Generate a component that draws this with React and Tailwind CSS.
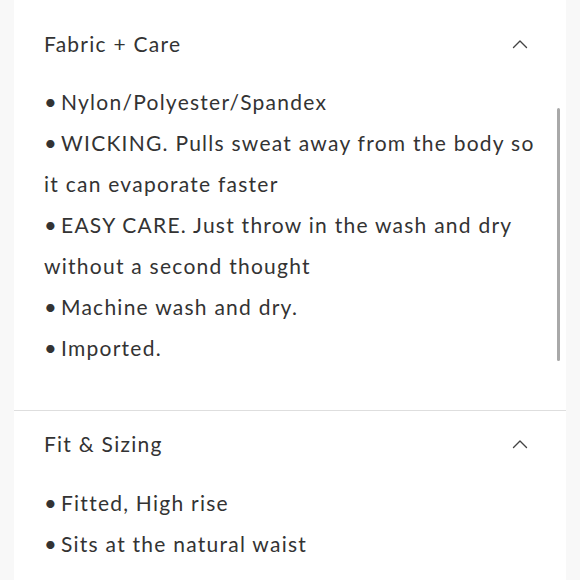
import React from "react";

const Chevron = () => (
  <svg width="16" height="10" viewBox="0 0 16 10" fill="none" className="text-[#444]">
    <polyline points="1.5,8.5 8,2 14.5,8.5" stroke="currentColor" strokeWidth="1.4" strokeLinecap="round" strokeLinejoin="round" />
  </svg>
);

const Section = ({ title, lines, className, bodyClass }) => (
  <div className={className}>
    <div className="flex items-center justify-between pl-[30px] pr-[38px] h-[41px]">
      <span>{title}</span>
      <Chevron />
    </div>
    <div className={`pl-[30px] ${bodyClass}`}>
      {lines.map((line, i) => (
        <div key={i} className="h-[41px] leading-[41px] whitespace-nowrap">
          {line.startsWith("• ") ? (
            <>
              <span className="inline-block w-[17px] text-[22px] tracking-normal align-top">•</span>
              {line.slice(2)}
            </>
          ) : (
            line
          )}
        </div>
      ))}
    </div>
  </div>
);

export default function App() {
  return (
    <div
      className="w-full h-[580px] bg-[#f8f8f8] px-[14px] overflow-hidden text-[21px] tracking-[1.25px] text-[#333]"
      style={{ fontFamily: "Lato, 'Noto Sans', sans-serif" }}
    >
      <div className="bg-white h-full relative">
        <Section
          title="Fabric + Care"
          className="pt-[23px] pb-[42px] border-b border-[#dedede]"
          bodyClass="mt-[17px]"
          lines={[
            "• Nylon/Polyester/Spandex",
            "• WICKING. Pulls sweat away from the body so",
            "it can evaporate faster",
            "• EASY CARE. Just throw in the wash and dry",
            "without a second thought",
            "• Machine wash and dry.",
            "• Imported.",
          ]}
        />
        <div className="absolute left-[543px] top-[108px] w-[3px] h-[253px] rounded-full bg-[#a9a9a9]" />
        <Section
          title="Fit & Sizing"
          className="pt-[12px]"
          bodyClass="mt-[18px]"
          lines={["• Fitted, High rise", "• Sits at the natural waist"]}
        />
      </div>
    </div>
  );
}
